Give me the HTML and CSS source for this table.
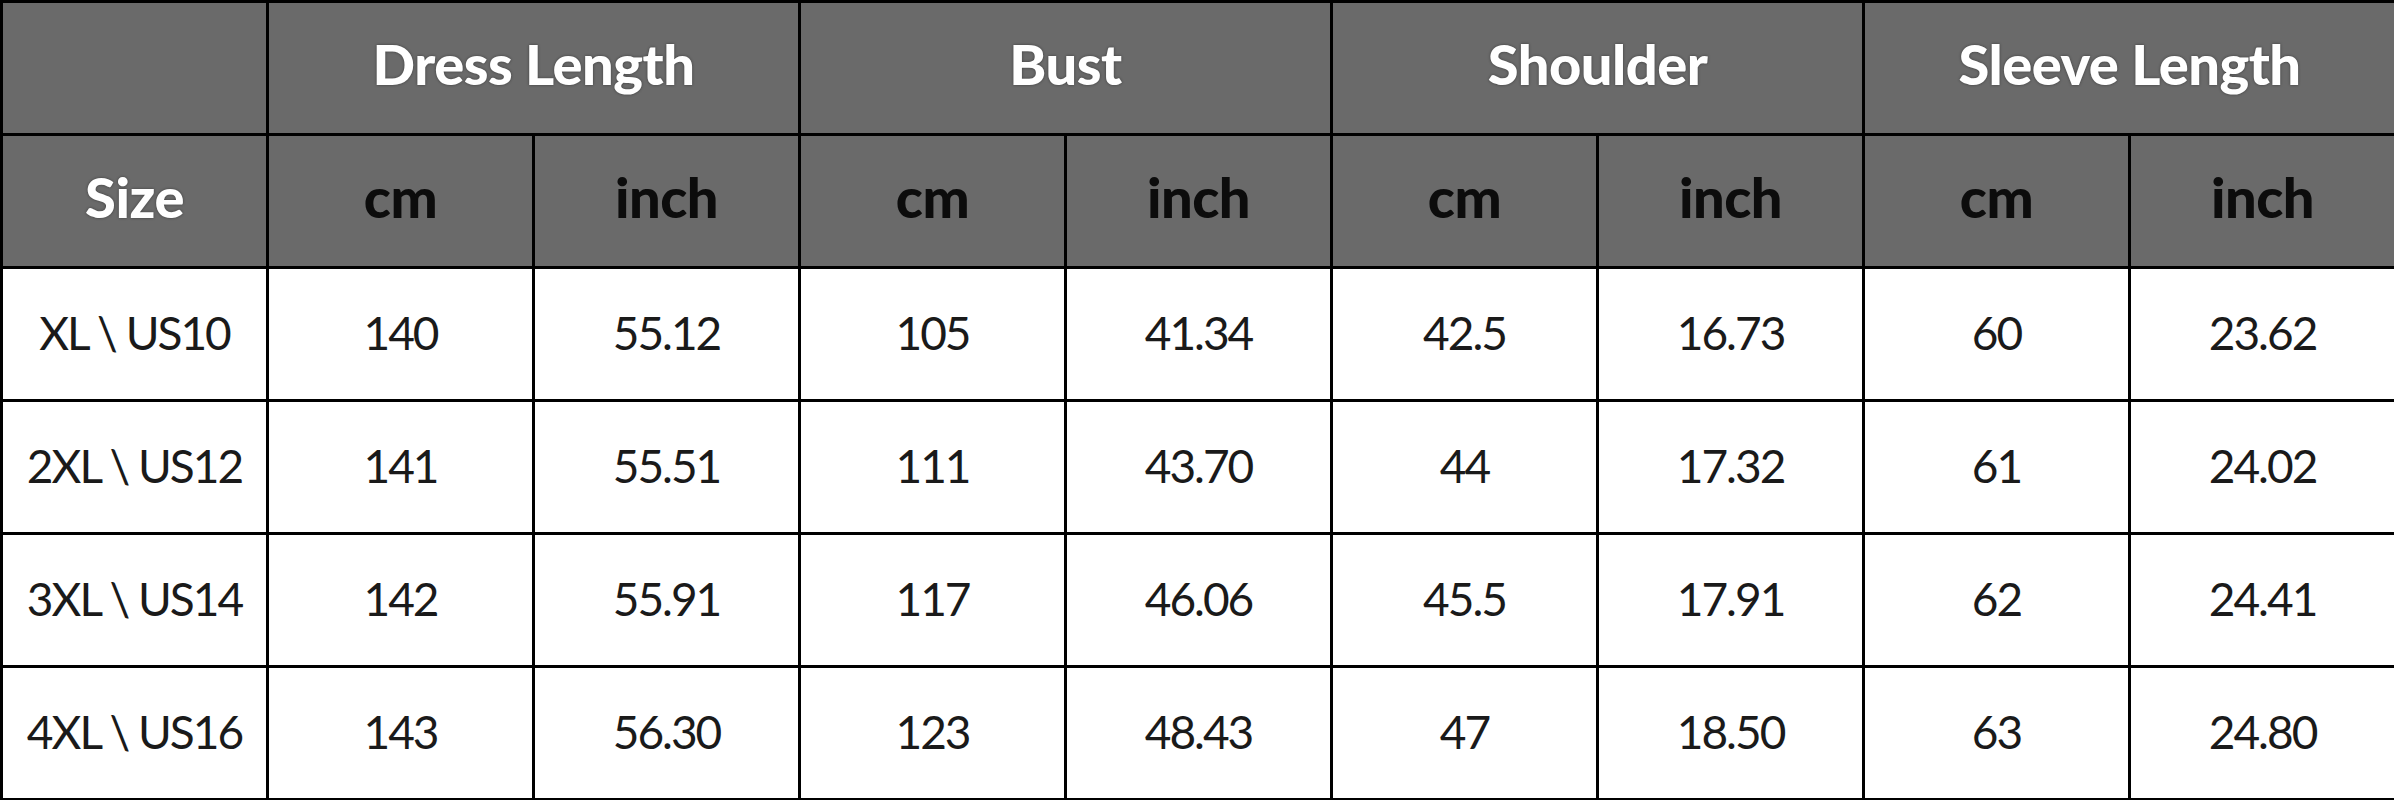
FILE: index.html
```html
<!DOCTYPE html>
<html>
<head>
<meta charset="utf-8">
<link rel="stylesheet" href="styles.css">
</head>
<body>
<table class="size-chart">
  <colgroup>
    <col class="c-size"><col><col><col><col><col><col><col><col>
  </colgroup>
  <thead>
    <tr class="group-row">
      <th class="blank"></th>
      <th colspan="2" class="group">Dress Length</th>
      <th colspan="2" class="group">Bust</th>
      <th colspan="2" class="group">Shoulder</th>
      <th colspan="2" class="group">Sleeve Length</th>
    </tr>
    <tr class="unit-row">
      <th class="size-head">Size</th>
      <th class="unit">cm</th><th class="unit">inch</th>
      <th class="unit">cm</th><th class="unit">inch</th>
      <th class="unit">cm</th><th class="unit">inch</th>
      <th class="unit">cm</th><th class="unit">inch</th>
    </tr>
  </thead>
  <tbody>
    <tr><td>XL \ US10</td><td>140</td><td>55.12</td><td>105</td><td>41.34</td><td>42.5</td><td>16.73</td><td>60</td><td>23.62</td></tr>
    <tr><td>2XL \ US12</td><td>141</td><td>55.51</td><td>111</td><td>43.70</td><td>44</td><td>17.32</td><td>61</td><td>24.02</td></tr>
    <tr><td>3XL \ US14</td><td>142</td><td>55.91</td><td>117</td><td>46.06</td><td>45.5</td><td>17.91</td><td>62</td><td>24.41</td></tr>
    <tr><td>4XL \ US16</td><td>143</td><td>56.30</td><td>123</td><td>48.43</td><td>47</td><td>18.50</td><td>63</td><td>24.80</td></tr>
  </tbody>
</table>
</body>
</html>
```
FILE: styles.css
```css
html, body {
  margin: 0;
  padding: 0;
  background: #ffffff;
}

.size-chart {
  width: 2394px;
  height: 800px;
  border-collapse: collapse;
  table-layout: fixed;
  font-family: Lato, "Liberation Sans", sans-serif;
  color: #1a1a1a;
}

.size-chart col {
  width: 266px;
}

.size-chart tr {
  height: 133px;
}

.size-chart th,
.size-chart td {
  border: 3px solid #000000;
  text-align: center;
  vertical-align: middle;
  padding: 0;
  line-height: 1;
}

.size-chart th {
  background: #6a6a6a;
  font-weight: 900;
  font-size: 56px;
  letter-spacing: -0.5px;
  padding-bottom: 9px;
}

.group,
.size-head {
  color: #ffffff;
  text-shadow: 0 0 3px rgba(0, 0, 0, 0.45);
}

.unit {
  color: #0c0c0c;
}

.size-chart td {
  background: #ffffff;
  font-size: 46px;
  font-weight: 400;
  letter-spacing: -2px;
  padding-bottom: 2px;
}
```
